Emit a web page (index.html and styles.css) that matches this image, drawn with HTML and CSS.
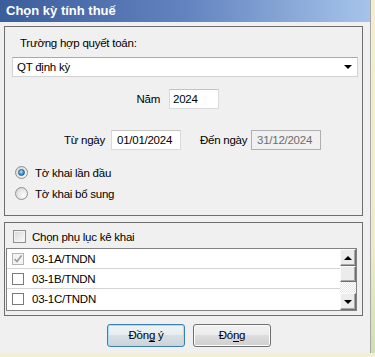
FILE: index.html
```html
<!doctype html>
<html>

<head>
    <title>Chọn kỳ tính thuế</title>
    <meta charset="utf-8">
    <link rel="stylesheet" href="styles.css">
</head>

<body>
    <div class="window">
        <div class="titlebar">Chọn kỳ tính thuế</div>
        <div class="client">
            <div class="group group-period">
                <div class="field-label">Trường hợp quyết toán:</div>
                <div class="combo">
                    <span>QT định kỳ</span>
                    <span class="combo-arrow"></span>
                </div>
                <div class="row row-year">
                    <span class="lbl lbl-year">Năm</span>
                    <div class="textbox tb-year">2024</div>
                </div>
                <div class="row row-dates">
                    <span class="lbl lbl-from">Từ ngày</span>
                    <div class="textbox tb-date">01/01/2024</div>
                    <span class="lbl lbl-to">Đến ngày</span>
                    <div class="textbox tb-date disabled">31/12/2024</div>
                </div>
                <div class="radio-list">
                    <div class="radio-row"><span class="radio checked"></span>Tờ khai lần đầu</div>
                    <div class="radio-row"><span class="radio"></span>Tờ khai bổ sung</div>
                </div>
            </div>

            <div class="group group-annex">
                <div class="check-row">
                    <span class="checkbox vista"></span>
                    <span class="check-label">Chọn phụ lục kê khai</span>
                </div>
                <div class="listbox">
                    <div class="list-items">
                        <div class="list-row"><span class="box disabled">
                            <svg width="10" height="10" viewBox="0 0 10 10"><path d="M1.5 5 L4 7.5 L8.5 1.5" fill="none" stroke="#9a9a9a" stroke-width="1.6"/></svg>
                        </span>03-1A/TNDN</div>
                        <div class="list-row"><span class="box"></span>03-1B/TNDN</div>
                        <div class="list-row last"><span class="box"></span>03-1C/TNDN</div>
                    </div>
                    <div class="scrollbar">
                        <div class="sb-btn"><span class="arrow-up"></span></div>
                        <div class="sb-thumb"></div>
                        <div class="sb-track"></div>
                        <div class="sb-btn"><span class="arrow-down"></span></div>
                    </div>
                </div>
            </div>

            <div class="buttons">
                <div class="btn default">Đồn<u>g</u> ý</div>
                <div class="btn">Đó<u>n</u>g</div>
            </div>
        </div>
    </div>
</body>

</html>
```

FILE: styles.css
```css
body {
    margin: 0;
    background: linear-gradient(to bottom, #f3efd0 0%, #eeecc8 70%, #cfe0b0 100%);
    font-family: "Liberation Sans", Arial, sans-serif;
    font-size: 11.5px;
    letter-spacing: -0.25px;
    color: #000;
}

.window {
    width: 370px;
    height: 353px;
    background: #f0f0f0;
    border-right: 1px solid #a8a8a8;
    display: flex;
    flex-direction: column;
}

.titlebar {
    height: 22px;
    line-height: 22px;
    padding-left: 6px;
    color: #fff;
    font-size: 13px;
    font-weight: bold;
    letter-spacing: 0;
    background: linear-gradient(to right, #3c5d9c 0%, #6283bf 50%, #a6c4ea 100%);
}

.client {
    flex: 1;
    padding: 4px 0 0 4px;
    display: flex;
    flex-direction: column;
}

.group {
    width: 357px;
    border: 1px solid #6e6e6e;
}

.group-period {
    height: 188px;
}

.group-annex {
    height: 92px;
    margin-top: 6px;
}

.field-label {
    margin: 9px 0 0 15px;
    line-height: 14px;
}

.combo {
    margin: 7px 0 0 7px;
    width: 346px;
    height: 20px;
    box-sizing: border-box;
    border: 1px solid #d2d2d2;
    border-top-color: #a9a9a9;
    background: #fff;
    display: flex;
    align-items: center;
    justify-content: space-between;
    padding: 0 4px 0 4px;
}

.combo-arrow {
    width: 0;
    height: 0;
    border-left: 4px solid transparent;
    border-right: 4px solid transparent;
    border-top: 4px solid #000;
    margin-right: 1px;
}

.row {
    display: flex;
    align-items: center;
    white-space: nowrap;
}

.row-year {
    margin-top: 12px;
    padding-left: 115px;
}

.row-dates {
    margin-top: 21px;
    padding-left: 40px;
}

.lbl {
    text-align: right;
    margin-right: 6px;
}

.lbl-year {
    width: 40px;
    margin-right: 9px;
}

.lbl-from {
    width: 60px;
}

.lbl-to {
    width: 45px;
    margin-left: 19px;
}

.textbox {
    height: 20px;
    box-sizing: border-box;
    border: 1px solid #dadada;
    border-top-color: #c4c4c4;
    background: #fff;
    line-height: 18px;
    padding-left: 5px;
}

.tb-year {
    width: 50px;
    padding-left: 3px;
}

.tb-date {
    width: 70px;
}

.textbox.disabled {
    background: #f0f0f0;
    border-color: #b0b0b0;
    color: #6d6d6d;
}

.radio-list {
    margin-top: 12px;
    padding-left: 10px;
}

.radio-row {
    height: 21px;
    display: flex;
    align-items: center;
}

.radio {
    width: 11px;
    height: 11px;
    border: 1px solid #8e8f8f;
    border-radius: 50%;
    margin-right: 7px;
    background: radial-gradient(circle at 65% 65%, #fdfdfd 0%, #e4e4e4 55%, #cfcfcf 100%);
    display: flex;
    align-items: center;
    justify-content: center;
}

.radio.checked::after {
    content: "";
    width: 5px;
    height: 5px;
    border-radius: 50%;
    border: 1px solid #1d5b8f;
    background: radial-gradient(circle at 40% 35%, #b4e2ff 0%, #3c95d6 55%, #1a5f9c 100%);
}

.check-row {
    margin: 7px 0 0 8px;
    height: 13px;
    display: flex;
    align-items: center;
}

.checkbox {
    width: 11px;
    height: 11px;
    border: 1px solid #8e8f8f;
    background: linear-gradient(135deg, #d6d6d6 0%, #eeeeee 60%, #fafafa 100%);
    box-shadow: inset 0 0 0 1px #f4f4f4;
}

.check-label {
    margin-left: 6px;
}

.listbox {
    margin: 5px 0 0 1px;
    width: 351px;
    height: 63px;
    box-sizing: border-box;
    border: 1px solid #828282;
    background: #fff;
    display: flex;
}

.list-items {
    flex: 1;
}

.list-row {
    height: 20px;
    box-sizing: border-box;
    border-bottom: 1px solid #d4d4d4;
    display: flex;
    align-items: center;
    padding-left: 5px;
}

.list-row.last {
    border-bottom: none;
}

.box {
    width: 10px;
    height: 10px;
    border: 1px solid #7a7a7a;
    background: #fff;
    margin-right: 8px;
    display: flex;
    align-items: center;
    justify-content: center;
}

.box.disabled {
    border-color: #b4b4b4;
    background: #f4f4f4;
}

.scrollbar {
    width: 16px;
    display: flex;
    flex-direction: column;
    background: repeating-conic-gradient(#fff 0% 25%, #e6e6e6 0% 50%) 0 0 / 2px 2px;
}

.sb-btn,
.sb-thumb {
    box-sizing: border-box;
    background: #ececec;
    border: 1px solid;
    border-color: #fafafa #6e6e6e #6e6e6e #fafafa;
    box-shadow: inset -1px -1px 0 #a8a8a8;
}

.sb-btn {
    height: 17px;
    display: flex;
    align-items: center;
    justify-content: center;
}

.sb-thumb {
    height: 16px;
}

.sb-track {
    flex: 1;
}

.arrow-up,
.arrow-down {
    width: 0;
    height: 0;
    border-left: 4px solid transparent;
    border-right: 4px solid transparent;
}

.arrow-up {
    border-bottom: 4px solid #000;
}

.arrow-down {
    border-top: 4px solid #000;
}

.buttons {
    margin-top: 8px;
    padding-left: 103px;
    display: flex;
    gap: 8px;
}

.btn {
    width: 78px;
    height: 23px;
    box-sizing: border-box;
    border: 1px solid #707070;
    border-radius: 3px;
    background: linear-gradient(#f2f2f2 0%, #ebebeb 50%, #dddddd 50%, #cfcfcf 100%);
    box-shadow: inset 0 0 0 1px #fcfcfc;
    text-align: center;
    line-height: 20px;
}

.btn.default {
    border-color: #3c7fb1;
    box-shadow: inset 0 0 0 1px #a9def5;
    background: linear-gradient(#eef3f6 0%, #e6ecef 50%, #d7dfe4 50%, #cbd4da 100%);
}

.btn u {
    text-decoration-thickness: 1px;
    text-underline-offset: 2px;
}
```
